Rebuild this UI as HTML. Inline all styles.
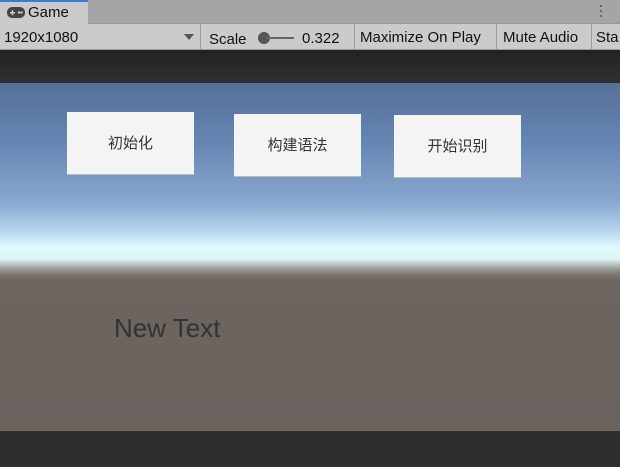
<!DOCTYPE html>
<html><head><meta charset="utf-8"><style>
*{margin:0;padding:0;box-sizing:border-box}
body{width:620px;height:467px;overflow:hidden;background:#282828;font-family:"Liberation Sans","Noto Sans CJK SC",sans-serif;position:relative}
.tabbar{position:absolute;left:0;top:0;width:620px;height:24px;background:#a5a5a5;border-bottom:1px solid #999}
.tab{position:absolute;left:0;top:0;width:88px;height:24px;background:#cbcbcb;border-top:2px solid #3a79d8;font-size:15px;color:#111;padding:2px 0 0 28px}
.tool{position:absolute;left:0;top:24px;width:620px;height:26px;background:#cbcbcb;border-bottom:1px solid #999;font-size:15px;color:#111}
.tool span{position:absolute;top:5px}
.sep{position:absolute;top:0;width:1px;height:25px;background:#9c9c9c}
.dark{position:absolute;left:0;top:50px;width:620px;height:33px;background:linear-gradient(#222,#303030)}
.game{position:absolute;left:0;top:83px;width:620px;height:348px;background:linear-gradient(180deg,#566f97 0px,#6586b3 60px,#8aa8d0 120px,#b6d6ef 148px,#e0faff 164px,#dcf4f4 176px,#9a9a96 186px,#7a736e 192px,#6c6560 198px,#6a625d 348px)}
.btn{position:absolute;width:127px;height:63px;background:#f4f4f4;border-bottom:1px solid #bbb;font-size:15px;color:#333;text-align:center;line-height:64px}
.nt{position:absolute;left:114px;top:313px;font-size:26px;color:#333}
.bot{position:absolute;left:0;top:431px;width:620px;height:36px;background:#2e2e2e}
</style></head><body>
<div class="tabbar"><div class="tab">Game</div>
<svg style="position:absolute;left:7px;top:7px" width="18" height="11" viewBox="0 0 18 11"><rect x="0" y="0" width="18" height="11" rx="5" fill="#444"/><rect x="3" y="5" width="5" height="1.5" fill="#ccc"/><rect x="4.7" y="3.2" width="1.5" height="5" fill="#ccc"/><circle cx="12" cy="5.5" r="1.2" fill="#ccc"/><circle cx="14.5" cy="5.5" r="1.2" fill="#ccc"/></svg>
<div style="position:absolute;left:600px;top:5px;width:2px;height:14px;background:repeating-linear-gradient(#666 0 2px,transparent 2px 5px)"></div>
</div>
<div class="tool">
<span style="left:4px">1920x1080</span>
<svg style="position:absolute;left:184px;top:10px" width="10" height="6"><path d="M0 0H10L5 6Z" fill="#555"/></svg>
<div class="sep" style="left:200px"></div>
<span style="left:209px;top:7px">Scale</span>
<div style="position:absolute;left:258px;top:8px;width:12px;height:12px;border-radius:6px;background:#555"></div>
<div style="position:absolute;left:266px;top:13px;width:28px;height:2px;background:#666"></div>
<span style="left:302px;top:6px">0.322</span>
<div class="sep" style="left:354px"></div>
<span style="left:360px">Maximize On Play</span>
<div class="sep" style="left:496px"></div>
<span style="left:503px">Mute Audio</span>
<div class="sep" style="left:591px"></div>
<span style="left:596px">Sta</span>
</div>
<div class="dark"></div>
<div class="game">
<div class="btn" style="left:67px;top:29px">初始化</div>
<div class="btn" style="left:234px;top:31px">构建语法</div>
<div class="btn" style="left:394px;top:32px">开始识别</div>
</div>
<div class="nt">New Text</div>
<div class="bot"></div>
</body></html>
